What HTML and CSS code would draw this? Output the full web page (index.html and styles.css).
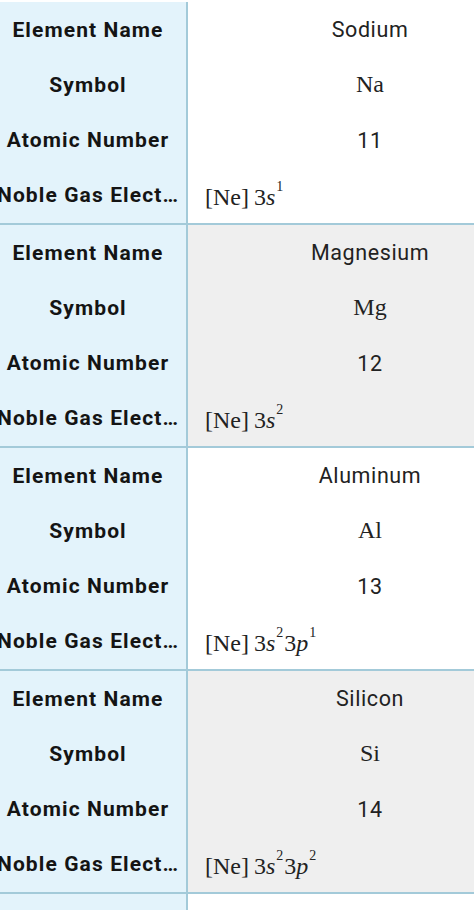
FILE: index.html
```html
<!DOCTYPE html>
<html>
<head>
<meta charset="utf-8">
<link rel="stylesheet" href="styles.css">
</head>
<body>
<div class="table">
  <div class="group">
    <div class="label"><span>Element Name</span></div><div class="value">Sodium</div>
    <div class="label"><span>Symbol</span></div><div class="value math">Na</div>
    <div class="label"><span>Atomic Number</span></div><div class="value">11</div>
    <div class="label"><span>Noble Gas Elect…</span></div><div class="config math"><span class="expr">[Ne]<span class="sp"></span>3<i>s</i><sup>1</sup></span></div>
  </div>
  <div class="group alt">
    <div class="label"><span>Element Name</span></div><div class="value">Magnesium</div>
    <div class="label"><span>Symbol</span></div><div class="value math">Mg</div>
    <div class="label"><span>Atomic Number</span></div><div class="value">12</div>
    <div class="label"><span>Noble Gas Elect…</span></div><div class="config math"><span class="expr">[Ne]<span class="sp"></span>3<i>s</i><sup>2</sup></span></div>
  </div>
  <div class="group">
    <div class="label"><span>Element Name</span></div><div class="value">Aluminum</div>
    <div class="label"><span>Symbol</span></div><div class="value math">Al</div>
    <div class="label"><span>Atomic Number</span></div><div class="value">13</div>
    <div class="label"><span>Noble Gas Elect…</span></div><div class="config math"><span class="expr">[Ne]<span class="sp"></span>3<i>s</i><sup>2</sup>3<i>p</i><sup>1</sup></span></div>
  </div>
  <div class="group alt">
    <div class="label"><span>Element Name</span></div><div class="value">Silicon</div>
    <div class="label"><span>Symbol</span></div><div class="value math">Si</div>
    <div class="label"><span>Atomic Number</span></div><div class="value">14</div>
    <div class="label"><span>Noble Gas Elect…</span></div><div class="config math"><span class="expr">[Ne]<span class="sp"></span>3<i>s</i><sup>2</sup>3<i>p</i><sup>2</sup></span></div>
  </div>
  <div class="group tail">
    <div class="label"></div><div class="value"></div>
  </div>
</div>
</body>
</html>
```

FILE: styles.css
```css
html, body {
  margin: 0;
  padding: 0;
  background: #ffffff;
}
body {
  width: 474px;
  height: 910px;
  overflow: hidden;
  font-family: Roboto, "Liberation Sans", sans-serif;
  color: #1d1d1d;
}
.table {
  padding-top: 2px;
}
.group {
  display: grid;
  grid-template-columns: 188px 1fr;
  grid-auto-rows: 55.25px;
  border-bottom: 2px solid #a3cad9;
  background: #ffffff;
}
.group.alt {
  background: #efefef;
}
.group.tail {
  border-bottom: none;
}
.label {
  background: #e3f3fb;
  border-right: 2px solid #a3cad9;
  display: flex;
  justify-content: center;
  align-items: center;
  padding-right: 10px;
  overflow: hidden;
  white-space: nowrap;
  font-weight: 700;
  font-size: 21px;
  letter-spacing: 1.1px;
  color: #141414;
}
.label span {
  flex: none;
}
.value {
  display: flex;
  justify-content: center;
  align-items: center;
  padding-left: 78px;
  font-size: 21.5px;
  letter-spacing: 0.6px;
  color: #222222;
}
.math {
  font-family: "Liberation Serif", "DejaVu Serif", serif;
  font-size: 24px;
  letter-spacing: 0;
}
.config {
  display: flex;
  align-items: center;
  padding-left: 17px;
  padding-top: 4px;
  white-space: nowrap;
  color: #222222;
}
.expr i {
  font-style: italic;
}
.expr sup {
  font-size: 14px;
  line-height: 0;
  vertical-align: 14px;
  margin-left: 1px;
  margin-right: 1px;
}
.sp {
  display: inline-block;
  width: 5px;
}
```
